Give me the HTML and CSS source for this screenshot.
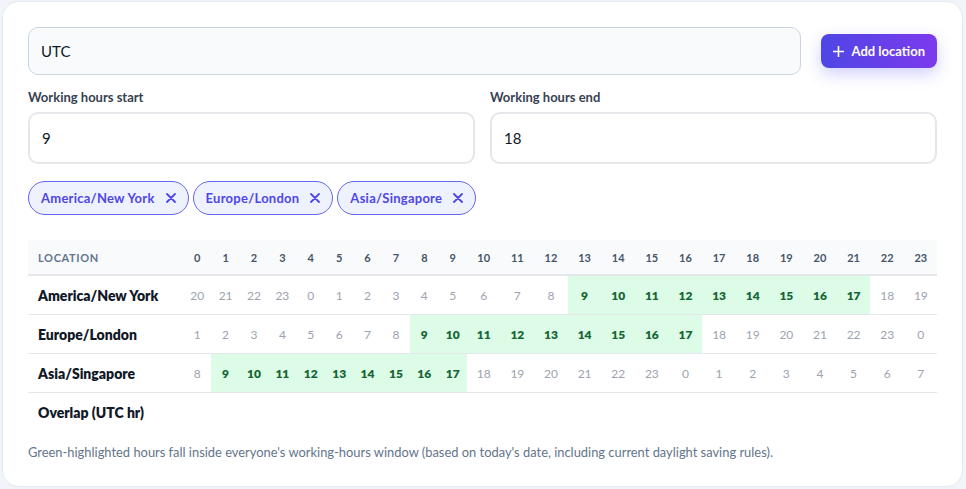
FILE: index.html
```html
<!DOCTYPE html>
<html>
<head>
<meta charset="utf-8">
<link rel="stylesheet" href="styles.css">
</head>
<body>
<div class="card">
  <div class="top-row">
    <input class="tz-input" type="text" value="UTC">
    <button class="add-btn">
      <svg class="plus" width="11" height="11" viewBox="0 0 11 11"><path d="M5.5 0.5v10M0.5 5.5h10" stroke="#fff" stroke-width="1.6" stroke-linecap="round"/></svg>
      <span>Add location</span>
    </button>
  </div>
  <div class="hours-row">
    <label class="field">
      <span class="field-label">Working hours start</span>
      <input class="hour-input" type="text" value="9">
    </label>
    <label class="field">
      <span class="field-label">Working hours end</span>
      <input class="hour-input" type="text" value="18">
    </label>
  </div>
  <div class="chips">
    <span class="chip">America/New York<svg class="x" width="10" height="10" viewBox="0 0 10 10"><path d="M1 1l8 8M9 1l-8 8" stroke="#4f46e5" stroke-width="1.8" stroke-linecap="round"/></svg></span>
    <span class="chip">Europe/London<svg class="x" width="10" height="10" viewBox="0 0 10 10"><path d="M1 1l8 8M9 1l-8 8" stroke="#4f46e5" stroke-width="1.8" stroke-linecap="round"/></svg></span>
    <span class="chip">Asia/Singapore<svg class="x" width="10" height="10" viewBox="0 0 10 10"><path d="M1 1l8 8M9 1l-8 8" stroke="#4f46e5" stroke-width="1.8" stroke-linecap="round"/></svg></span>
  </div>
  <div class="table" id="table"></div>
  <p class="note">Green-highlighted hours fall inside everyone's working-hours window (based on today's date, including current daylight saving rules).</p>
</div>
<script src="app.js"></script>
</body>
</html>
```

FILE: styles.css
```css
* { box-sizing: border-box; }
html, body { margin: 0; padding: 0; }
body {
  background: #f1f5f9;
  font-family: Lato, "Noto Sans", sans-serif;
  color: #111827;
  padding: 1px 3px 2px 2px;
}
.card {
  background: #fff;
  border: 1px solid #e2e8f0;
  border-radius: 16px;
  padding: 25px 25px 24px 25px;
  height: 486px;
}
.top-row {
  display: flex;
  align-items: center;
  gap: 20px;
}
.tz-input {
  flex: 1;
  height: 48px;
  border: 1px solid #cbd5e1;
  background: #f8fafc;
  border-radius: 10px;
  padding: 0 12px;
  font: 15px Lato, sans-serif;
  color: #111827;
  outline: none;
}
.add-btn {
  display: flex;
  align-items: center;
  gap: 8px;
  height: 34px;
  padding: 0 12px;
  border: 0;
  border-radius: 8px;
  background: linear-gradient(90deg, #4f46e5, #7c3aed);
  color: #fff;
  font: 700 13px Lato, sans-serif;
  box-shadow: 0 6px 16px rgba(99, 102, 241, 0.3);
}
.hours-row {
  display: grid;
  grid-template-columns: 1fr 1fr;
  gap: 15px;
  margin-top: 14px;
}
.field { display: flex; flex-direction: column; }
.field-label {
  font-weight: 700;
  font-size: 13px;
  line-height: 16px;
  color: #374151;
  margin-bottom: 7px;
}
.hour-input {
  height: 52px;
  border: 2px solid #e5e7eb;
  border-radius: 10px;
  padding: 0 12px;
  font: 15px Lato, sans-serif;
  color: #111827;
  outline: none;
  background: #fff;
}
.chips {
  display: flex;
  gap: 4px;
  margin-top: 17px;
}
.chip {
  display: inline-flex;
  align-items: center;
  gap: 11px;
  height: 34px;
  padding: 0 12px;
  border: 1px solid #6366f1;
  background: #eef2ff;
  border-radius: 17px;
  color: #4f46e5;
  font-weight: 700;
  font-size: 13px;
  letter-spacing: 0.25px;
}
.table { margin-top: 25px; }
.trow {
  display: grid;
  grid-template-columns: 155px repeat(10, 28.4px) repeat(14, 33.64px);
  height: 39px;
  border-bottom: 1px solid #e5e7eb;
}
.trow.head {
  height: 36px;
  background: #f8fafc;
  border-bottom: 2px solid #e5e7eb;
}
.trow.last { border-bottom: 0; }
.cell {
  display: flex;
  align-items: center;
  justify-content: center;
  font-size: 12px;
  color: #9ca3af;
}
.head .cell {
  color: #475569;
  font-weight: 700;
  font-size: 11px;
}
.cell.loc {
  justify-content: flex-start;
  padding-left: 10px;
  font-size: 14px;
  font-weight: 800;
  color: #111827;
}
.head .cell.loc {
  font-size: 11px;
  font-weight: 700;
  color: #64748b;
  letter-spacing: 0.06em;
}
.cell.on {
  background: #dcfce7;
  color: #166534;
  font-weight: 800;
}
.note {
  margin: 12px 0 0;
  font-size: 12.9px;
  line-height: 16px;
  color: #64748b;
}
```

FILE: app.js
```js
(function () {
  var t = document.getElementById('table');
  var rows = [
    { name: 'America/New York', off: -4 },
    { name: 'Europe/London', off: 1 },
    { name: 'Asia/Singapore', off: 8 }
  ];
  function row(cls) {
    var r = document.createElement('div');
    r.className = 'trow' + (cls ? ' ' + cls : '');
    t.appendChild(r);
    return r;
  }
  function cell(r, text, cls) {
    var c = document.createElement('div');
    c.className = 'cell' + (cls ? ' ' + cls : '');
    c.textContent = text;
    r.appendChild(c);
  }
  var h = row('head');
  cell(h, 'Location'.toUpperCase(), 'loc');
  for (var i = 0; i < 24; i++) cell(h, String(i));
  rows.forEach(function (d) {
    var r = row();
    cell(r, d.name, 'loc');
    for (var u = 0; u < 24; u++) {
      var l = (u + d.off + 24) % 24;
      cell(r, String(l), l >= 9 && l <= 17 ? 'on' : '');
    }
  });
  var o = row('last');
  cell(o, 'Overlap (UTC hr)', 'loc');
  for (var k = 0; k < 24; k++) cell(o, '');
})();
```
